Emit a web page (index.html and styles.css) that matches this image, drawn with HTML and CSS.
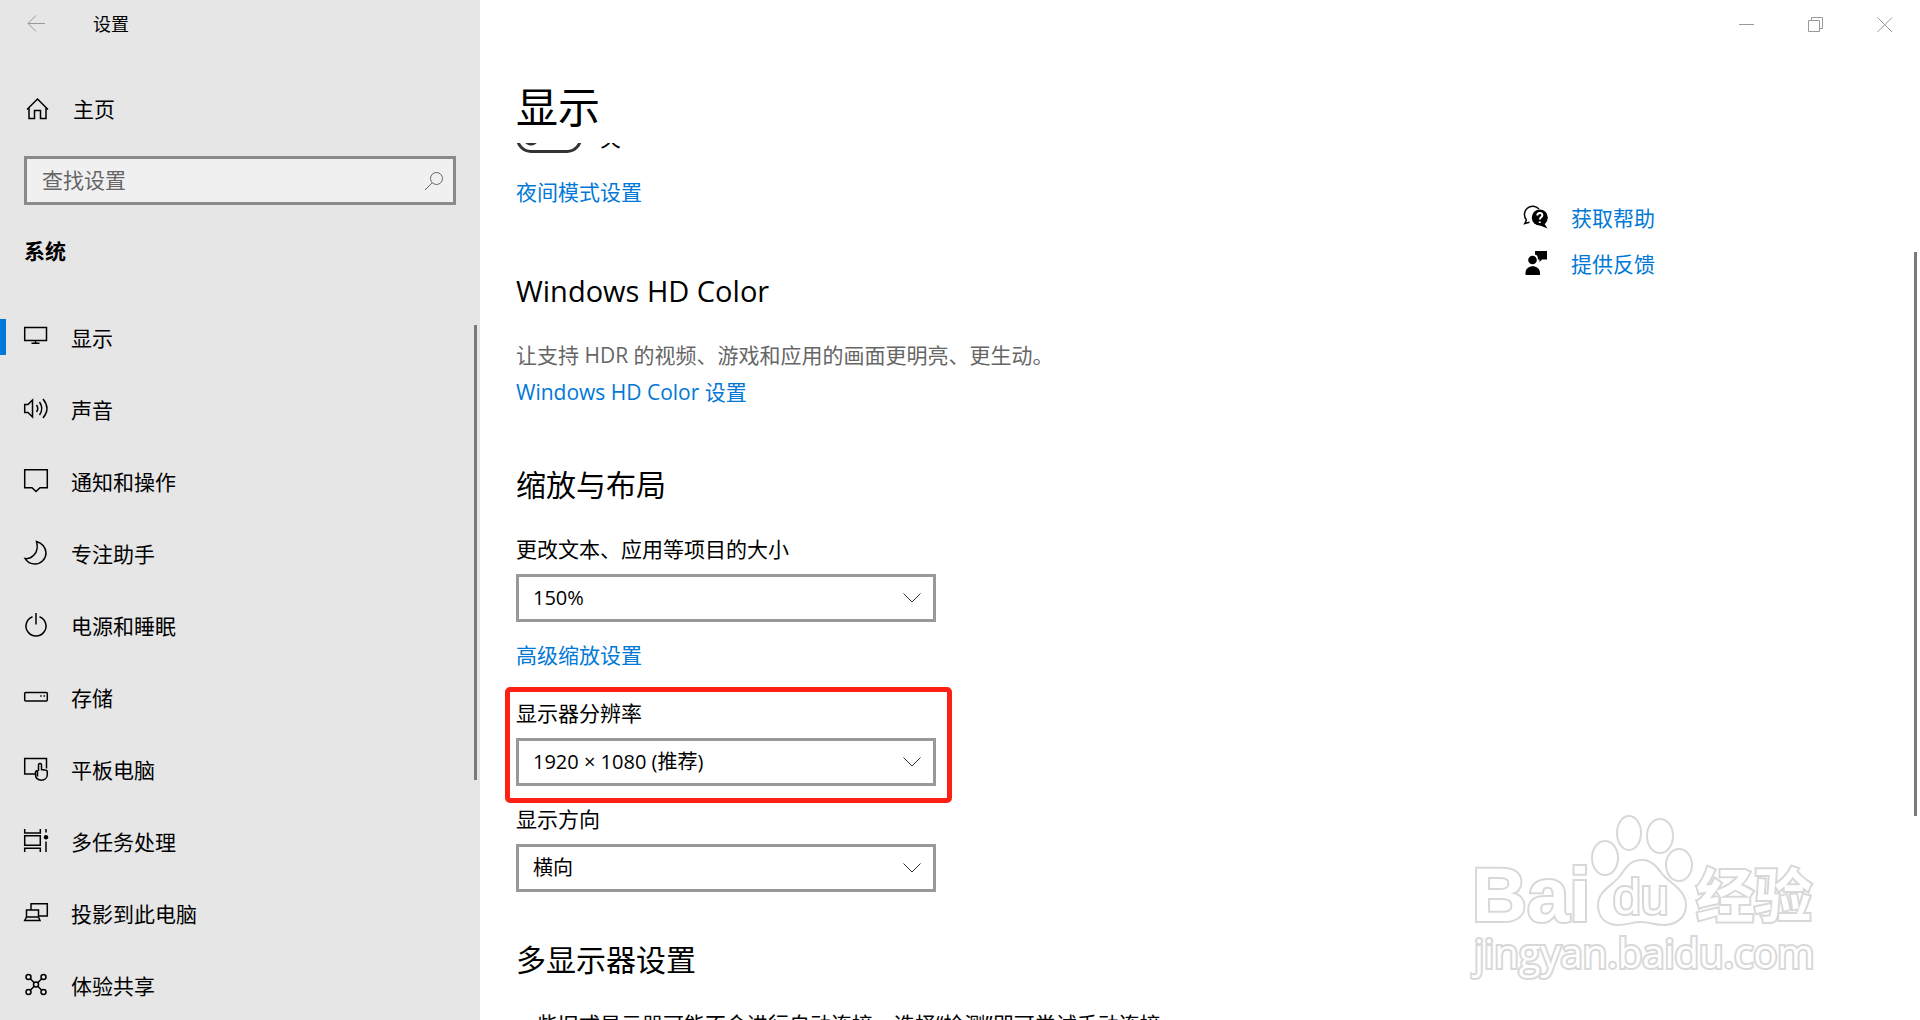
FILE: index.html
```html
<!DOCTYPE html>
<html lang="zh-CN">
<head>
    <meta charset="UTF-8">
    <meta name="viewport" content="width=device-width, initial-scale=1.0">
    <title>设置</title>
    <link rel="stylesheet" href="styles.css">
</head>
<body>
<aside class="sidebar">
    <div class="titlebar">
        <button class="back" type="button" aria-label="返回">
            <svg width="18" height="18" viewBox="0 0 18 18"><path d="M18 8.500H1M9 .5L1 8.500l8 8"/></svg>
        </button>
        <span class="app-title">设置</span>
    </div>
    <a class="home" href="#">
        <svg class="icon" viewBox="0 0 24 24"><path d="M2 12.500L12.500 2L23 12.500M4 11V21.500H9.500V13.500H15.500V21.500H21V11"/></svg>
        <span>主页</span>
    </a>
    <form class="search">
        <input type="text" placeholder="查找设置" aria-label="查找设置">
        <button type="submit" aria-label="搜索">
            <svg width="20" height="20" viewBox="0 0 20 20"><circle cx="12.500" cy="7.500" r="6"/><path d="M8.200 11.800L1 19"/></svg>
        </button>
    </form>
    <h2 class="group">系统</h2>
    <nav class="nav">
        <a class="nav-item active" href="#">
            <svg class="icon" viewBox="0 0 24 24"><path d="M.7 2.500H22.500V15.500H.7zM11.500 15.500V18M7.500 18.200H15.500"/></svg>
            <span>显示</span>
        </a>
        <a class="nav-item" href="#">
            <svg class="icon" viewBox="0 0 24 24"><path d="M.7 7.500H4L8.500 3V20L4 15.500H.7zM12.500 8Q15 11.500 12.500 15M15.500 5Q20 11.500 15.500 18M19 2Q27 11.500 19 21"/></svg>
            <span>声音</span>
        </a>
        <a class="nav-item" href="#">
            <svg class="icon" viewBox="0 0 24 24"><path d="M.7 .7H23.300V18.700H16L12 22.500L8 18.700H.7z"/></svg>
            <span>通知和操作</span>
        </a>
        <a class="nav-item" href="#">
            <svg class="icon" viewBox="0 0 24 24"><path d="M12.500 .5C18 2 22 6.500 22 12C22 18 17 23 11 23C7 23 3 21 1 17.500C6 18.500 16 13 12.500 .5z"/></svg>
            <span>专注助手</span>
        </a>
        <a class="nav-item" href="#">
            <svg class="icon" viewBox="0 0 24 24"><path d="M12 0V11.500M8.500 3.700A10 10 0 1 0 15.500 3.700"/></svg>
            <span>电源和睡眠</span>
        </a>
        <a class="nav-item" href="#">
            <svg class="icon" viewBox="0 0 24 24"><rect x=".7" y="7.500" width="22.600" height="8.500" rx="1"/><path d="M16.200 11h1.500M19.500 11H21"/></svg>
            <span>存储</span>
        </a>
        <a class="nav-item" href="#">
            <svg class="icon" viewBox="0 0 24 24"><path d="M11 17H.7V1.500H22.500V11.500M13.500 19.500V15C13.500 13 12 13.500 11.500 15V18C11.500 25 23.300 25 23.300 17.500V15Q23.300 13 21 13L17.500 12.500V8C17.500 6 14.500 6 14.500 8V14"/></svg>
            <span>平板电脑</span>
        </a>
        <a class="nav-item" href="#">
            <svg class="icon" viewBox="0 0 24 24"><path d="M.7 0V4H16.300V0M.7 6.700H16.300V16.300H.7zM.7 23V19.300H16.300V23M22 0V3.500M22 12.500V23"/><circle class="solid" cx="22" cy="8.300" r="2.200"/></svg>
            <span>多任务处理</span>
        </a>
        <a class="nav-item" href="#">
            <svg class="icon" viewBox="0 0 24 24"><path d="M7 9V2.700H23.300V15H15M2.500 9H14.500V16H2.500zM2.500 16L.7 19.500H16L14.500 16"/></svg>
            <span>投影到此电脑</span>
        </a>
        <a class="nav-item" href="#">
            <svg class="icon" viewBox="0 0 24 24"><circle cx="4.500" cy="4" r="2.500"/><circle cx="19.500" cy="4" r="2.500"/><circle cx="4.500" cy="19" r="2.500"/><circle cx="19.500" cy="19" r="2.500"/><circle cx="12" cy="11.500" r="2.500"/><path d="M6.300 5.800L10.200 9.700M17.700 5.800L13.800 9.700M6.300 17.200L10.200 13.300M17.700 17.200L13.800 13.300"/></svg>
            <span>体验共享</span>
        </a>
    </nav>
    <div class="scroll-thumb side-thumb"></div>
</aside>

<main class="content">
    <div class="window-buttons">
        <button type="button" aria-label="最小化"><svg width="16" height="16" viewBox="0 0 16 16"><path d="M0 8.500H15"/></svg></button>
        <button type="button" aria-label="还原"><svg width="16" height="16" viewBox="0 0 16 16"><path d="M.5 4.500H11.500V15.500H.5zM3.500 4.500V1.500H14.500V12.500H11.500"/></svg></button>
        <button type="button" aria-label="关闭"><svg width="16" height="16" viewBox="0 0 16 16"><path d="M.5 1.500L15 16M15 1.500L.5 16"/></svg></button>
    </div>
    <h1 class="page-title">显示</h1>
    <div class="page">
        <div class="settings">
            <section>
                <label class="toggle"><input type="checkbox"><span class="track"></span><span>关</span></label>
                <a class="link" href="#">夜间模式设置</a>
            </section>

            <section class="color">
                <h2>Windows HD Color</h2>
                <p class="hint">让支持 HDR 的视频、游戏和应用的画面更明亮、更生动。</p>
                <a class="link" href="#">Windows HD Color 设置</a>
            </section>

            <section class="layout">
                <h2>缩放与布局</h2>
                <div class="field">
                    <label for="scale">更改文本、应用等项目的大小</label>
                    <select id="scale"><option>150%</option></select>
                </div>
                <a class="link advanced" href="#">高级缩放设置</a>
                <div class="field marked">
                    <label for="resolution">显示器分辨率</label>
                    <select id="resolution"><option>1920 × 1080 (推荐)</option></select>
                </div>
                <div class="field">
                    <label for="orientation">显示方向</label>
                    <select id="orientation"><option>横向</option></select>
                </div>
            </section>

            <section class="displays">
                <h2>多显示器设置</h2>
                <p>一些旧式显示器可能不会进行自动连接。选择“检测”即可尝试手动连接。</p>
            </section>
        </div>
        <div class="support">
            <a class="link" href="#">
                <svg class="icon" viewBox="0 0 24 24"><path d="M2.500 14L.8 17.500L5.500 16.200M2.500 14A7.700 7.700 0 1 1 15 3"/><circle class="solid" cx="15.800" cy="11.500" r="8"/><path class="solid" d="M20 17L23.500 22.500L15 19z"/><path class="mark" d="M13.300 9.500C13.300 6 18.700 6 18.300 9.500C18 11.500 15.800 11 15.800 13.500M15.800 15.500V17"/></svg>
                <span>获取帮助</span>
            </a>
            <a class="link" href="#">
                <svg class="icon" viewBox="0 0 24 24"><circle class="solid" cx="8.500" cy="8" r="4.300"/><path class="solid" d="M1.500 23V21C1.500 12 16 12 16 21V23zM11 -1H23V7.500H18L15.500 10V7.500H14C14 4.500 13 3 11 2.500z"/></svg>
                <span>提供反馈</span>
            </a>
        </div>
    </div>
    <div class="scroll-thumb page-thumb"></div>
    <svg class="watermark" viewBox="0 0 360 180" width="360" height="180">
        <text class="wm-logo" x="2" y="111">Bai</text>
        <ellipse cx="135" cy="48" rx="13" ry="17"/>
        <ellipse cx="159" cy="23" rx="12" ry="17"/>
        <ellipse cx="190" cy="26" rx="13" ry="17"/>
        <ellipse cx="209" cy="55" rx="13" ry="16"/>
        <path d="M171 50C181 49 187 57 193 65C200 73 216 80 216 95C216 108 206 115 193 115C184 115 180 112 171 112C162 112 158 115 147 115C134 114 128 106 128 95C128 81 142 76 149 67C156 58 160 50 171 50z"/>
        <text class="wm-du" x="143" y="104">du</text>
        <text class="wm-cjk" x="226" y="107">经验</text>
        <text class="wm-url" x="4" y="158">jingyan.baidu.com</text>
    </svg>
</main>
</body>
</html>
```

FILE: styles.css
```css
* {
    box-sizing: border-box;
}

body {
    margin: 0;
    display: flex;
    height: 100vh;
    overflow: hidden;
    background: #ffffff;
    color: #000000;
    font-family: "Open Sans", "Noto Sans CJK SC", sans-serif;
    font-size: 21px;
    line-height: 32px;
}

a {
    color: inherit;
    text-decoration: none;
}

h1, h2, p {
    margin: 0;
    font-weight: 400;
}

button {
    padding: 0;
    border: none;
    background: none;
    cursor: pointer;
}

svg {
    display: block;
    fill: none;
    stroke: #999999;
    stroke-width: 1;
}

.icon {
    width: 24px;
    height: 24px;
    flex: none;
    stroke: #000000;
    stroke-width: 1.5;
    overflow: visible;
}

.solid {
    fill: #000000;
    stroke: none;
}

.mark {
    stroke: #ffffff;
    stroke-width: 2;
}

/* sidebar */
.sidebar {
    position: relative;
    flex: none;
    width: 25%;
    min-width: 320px;
    overflow: hidden;
    background: #e6e6e6;
}

.titlebar {
    display: flex;
    align-items: center;
    height: 48px;
    padding-left: 27px;
    gap: 48px;
}

.app-title {
    font-size: 18px;
}

.home {
    display: flex;
    align-items: center;
    height: 72px;
    margin-top: 25px;
    padding: 0 25px;
    gap: 24px;
}

.search {
    display: flex;
    align-items: center;
    height: 49px;
    margin: 11px 24px 0;
    border: 3px solid #8a8a8a;
    background: #f0f0f0;
}

.search input {
    flex: 1;
    min-width: 0;
    padding: 0 0 2px 15px;
    border: none;
    outline: none;
    background: none;
    font: inherit;
}

.search input::placeholder {
    color: #666666;
    opacity: 1;
}

.search button {
    padding-right: 9px;
}

.search svg {
    stroke: #666666;
}

.group {
    margin: 30px 24px 34px;
    font-size: 21px;
    font-weight: 700;
}

.nav-item {
    display: flex;
    align-items: center;
    height: 72px;
    padding-left: 24px;
    gap: 23px;
}

.nav-item span {
    padding-top: 2px;
}

.active {
    background: linear-gradient(#0078d7, #0078d7) left center / 6px 36px no-repeat;
}

.scroll-thumb {
    position: absolute;
    width: 3px;
    background: #7a7a7a;
}

.side-thumb {
    top: 325px;
    right: 3px;
    height: 455px;
}

.page-thumb {
    top: 252px;
    right: 3px;
    height: 564px;
}

/* main area */
.content {
    position: relative;
    display: flex;
    flex: 1;
    flex-direction: column;
    min-width: 0;
}

.window-buttons {
    display: flex;
    justify-content: flex-end;
    height: 48px;
    padding-right: 1px;
}

.window-buttons button {
    display: flex;
    align-items: center;
    justify-content: center;
    width: 69px;
}

.page-title {
    margin-top: 31px;
    padding-left: 36px;
    font-size: 42px;
    line-height: 56px;
}

.page {
    display: flex;
    flex: 1;
    min-height: 0;
    margin-top: 8px;
    padding-left: 36px;
    overflow: hidden;
}

.settings {
    flex: 1;
    margin-top: -21px;
}

.settings h2 {
    margin-bottom: 26px;
    font-size: 30px;
    line-height: 44px;
}

.settings .color h2 {
    font-size: 29px;
}

.color {
    margin-top: 61px;
}

.layout {
    margin-top: 55px;
}

.displays {
    margin-top: 46px;
}

.link {
    color: #0078d7;
}

.settings .link {
    display: block;
    width: fit-content;
}

.toggle {
    display: flex;
    align-items: center;
    margin-bottom: 22px;
    gap: 18px;
}

.toggle input {
    position: absolute;
    opacity: 0;
}

.track {
    width: 66px;
    height: 30px;
    border: 3px solid #333333;
    border-radius: 15px;
    background: radial-gradient(circle at 12px 12px, #333333 7px, transparent 8px);
}

.hint {
    margin-bottom: 5px;
    color: #666666;
}

.field {
    width: 420px;
}

.field label {
    display: block;
    margin-bottom: 9px;
}

.field select {
    display: block;
    width: 100%;
    height: 48px;
    padding: 0 14px;
    border: 3px solid #999999;
    border-radius: 0;
    appearance: none;
    background: #ffffff url("data:image/svg+xml,%3Csvg xmlns='http://www.w3.org/2000/svg' width='18' height='10'%3E%3Cpath d='M.5 .5L9 9L17.500 .5' fill='none' stroke='%23333'/%3E%3C/svg%3E") right 12px center no-repeat;
    color: #000000;
    font: inherit;
    font-size: 20px;
}

.advanced {
    margin: 17px 0 16px;
}

/* red frame drawn round the resolution field */
.marked {
    width: 447px;
    margin-left: -11px;
    padding: 5px 11px 12px 6px;
    border: 5px solid #ff2015;
    border-radius: 5px;
}

.support {
    width: 396px;
    padding-top: 59px;
}

.support .link {
    display: flex;
    align-items: center;
    margin-bottom: 14px;
    gap: 23px;
}

.watermark {
    position: absolute;
    right: 90px;
    bottom: 30px;
    fill: #ffffff;
    stroke: #d8d8d8;
    stroke-width: 2;
    font-family: "Liberation Sans", sans-serif;
}

/* only the outer half of the stroke shows, so the letters stay heavy */
.watermark text {
    stroke-width: 4;
    paint-order: stroke;
}

.wm-logo {
    font-size: 76px;
    font-weight: 700;
}

.wm-du {
    font-size: 50px;
}

.wm-cjk {
    font-family: "Noto Sans CJK SC", sans-serif;
    font-size: 58px;
    font-weight: 700;
}

.wm-url {
    font-family: "Open Sans", sans-serif;
    font-size: 40px;
}
```
